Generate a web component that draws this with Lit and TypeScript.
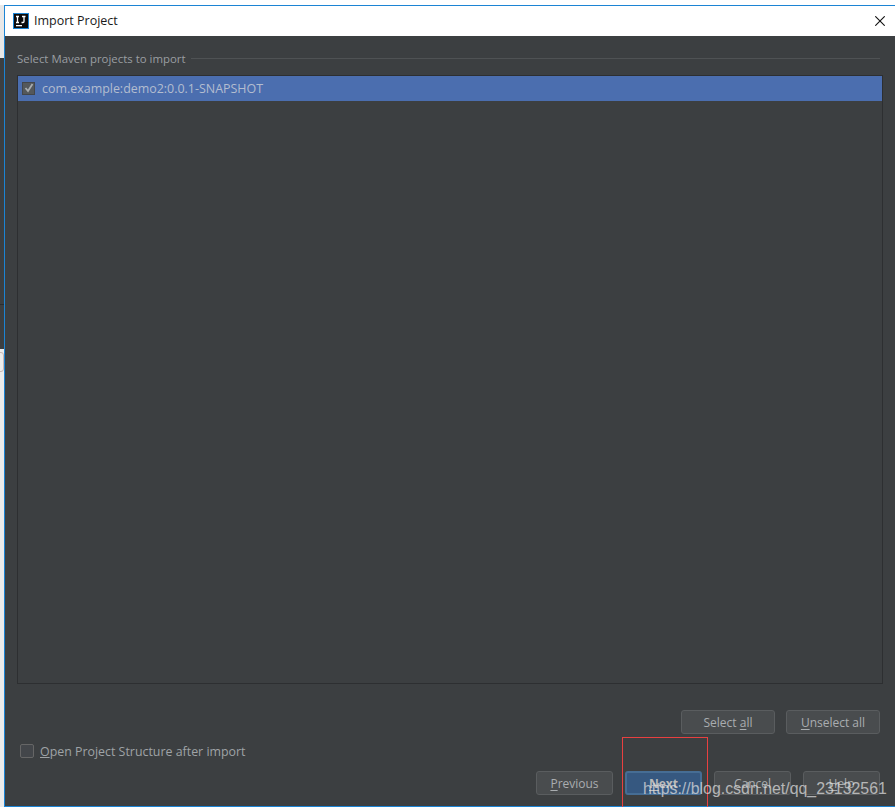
import { LitElement, html, css } from "lit";
import { customElement } from "lit/decorators.js";

@customElement("app-root")
export class AppRoot extends LitElement {
  static styles = css`
    :host {
      display: block;
      position: relative;
      width: 895px;
      height: 807px;
      overflow: hidden;
      background: #fff;
      font-family: "Open Sans", "Noto Sans", sans-serif;
      font-size: 12px;
      color: #a9adb0;
    }
    .page { display: flex; height: 807px; }
    .strip { width: 4px; display: flex; flex-direction: column; flex: none; overflow: hidden; }
    .s0 { height: 5px; background: #fff; flex: none; }
    .s1 { height: 53px; background: #e8e8e8; flex: none; }
    .s2 { height: 246px; background: #3c3f41; flex: none; }
    .s2b { height: 1px; background: #2b2d2e; flex: none; }
    .s3 { height: 44px; background: #3c3f41; flex: none; }
    .s4 { flex: 1; background: #ececec; padding-top: 3px; }
    .glyph { display: block; width: 5px; height: 18px; margin-left: -3px; border: 1px solid #c9b8b4; border-radius: 3px; }
    .window {
      flex: 1;
      display: flex;
      flex-direction: column;
      margin-top: 5px;
      border-left: 1px solid #1c84d4;
      border-top: 1px solid #1c84d4;
      border-bottom: 1px solid #1c84d4;
      min-width: 0;
    }
    .title {
      height: 29px;
      padding: 0 10px 1px 8px;
      flex: none;
      background: #fff;
      display: flex;
      align-items: center;
      color: #1a1a1a;
      font-size: 12.5px;
    }
    .title svg.logo { margin-right: 5px; }
    .title .name { flex: 1; }
    .body {
      flex: 1;
      background: #3c3f41;
      padding: 13px 15px 11px 12px;
      display: flex;
      flex-direction: column;
      min-height: 0;
    }
    .legend { display: flex; align-items: center; gap: 6px; height: 18px; font-size: 11.4px; color: #9a9ea1; }
    .legend i { flex: 1; height: 1px; background: #4f5254; }
    .list {
      margin: 8px -3px 0 0;
      height: 607px;
      border: 1px solid #2d2f31;
      background: #3c3f41;
      flex: none;
    }
    .row {
      height: 24px;
      padding: 0 0 1px 4px;
      background: #4b6eaf;
      display: flex;
      align-items: center;
      gap: 7px;
      color: #b3bdcf;
      font-size: 12.45px;
    }
    .cb {
      width: 12px;
      height: 12px;
      border: 1px solid #5d6061;
      border-radius: 2px;
      background: #45484a;
      flex: none;
      display: flex;
      align-items: center;
      justify-content: center;
      box-sizing: content-box;
    }
    .row .cb { width: 11px; height: 11px; background: #54585b; border-color: #43464a; border-radius: 0; }
    .select-row { display: flex; justify-content: flex-end; gap: 11px; margin-top: 26px; }
    .btn {
      width: 94px;
      height: 24px;
      box-sizing: border-box;
      border: 1px solid #5a5d5f;
      border-radius: 3px;
      background: #494c4e;
      color: #a9adb0;
      display: flex;
      align-items: center;
      justify-content: center;
      font-size: 12px;
    }
    .btn u { text-underline-offset: 2px; }
    .foot { display: flex; flex-direction: column; }
    .open { display: flex; align-items: center; gap: 6px; margin: 7px 0 0 3px; height: 20px; color: #9fa3a6; font-size: 12.4px; }
    .open .cb { border-color: #666; background: #43464a; }
    .nav { display: flex; justify-content: flex-end; gap: 12px; margin-top: 10px; }
    .nav .btn { width: 77px; }
    .nav .btn.next { background: #365880; border: 2px solid #466d94; color: #bbb; font-weight: 700; }
    .mark { position: absolute; left: 622px; top: 737px; width: 86px; height: 70px; box-sizing: border-box; border: 1px solid #e84040; border-bottom: none; }
    .wm {
      position: absolute;
      left: 643px;
      top: 779px;
      font-family: "Liberation Sans", Arial, sans-serif;
      font-size: 15.9px;
      line-height: 20px;
      color: rgba(225, 225, 225, 0.72);
      white-space: nowrap;
    }
  `;

  render() {
    return html`
      <div class="page">
        <div class="strip">
          <div class="s0"></div><div class="s1"></div><div class="s2"></div><div class="s2b"></div><div class="s3"></div>
          <div class="s4"><span class="glyph"></span></div>
        </div>
        <div class="window">
          <div class="title">
            <svg class="logo" width="16" height="16" viewBox="0 0 16 16">
              <rect x="0.5" y="0.5" width="15" height="15" fill="#0c0c0c" stroke="#1c84d4"/>
              <path d="M3 3.500h3M4.500 3.500v6M3 9.500h3M9 3.500h3.500M11 3.500v5q0 1-1 1H8.500" fill="none" stroke="#fff" stroke-width="1.300"/>
              <rect x="3" y="12" width="6" height="1.300" fill="#fff"/>
            </svg>
            <span class="name">Import Project</span>
            <svg width="10" height="10" viewBox="0 0 10 10"><path d="M.3.300l9.400 9.400M9.700.300l-9.400 9.400" stroke="#111" stroke-width="1.100"/></svg>
          </div>
          <div class="body">
            <div class="legend"><span>Select Maven projects to import</span><i></i></div>
            <div class="list">
              <div class="row">
                <span class="cb"><svg width="10" height="10" viewBox="0 0 10 10"><path d="M1.500 5l2.500 3 4.500-7" fill="none" stroke="#a8acaf" stroke-width="1.800"/></svg></span>
                <span>com.example:demo2:0.0.1-SNAPSHOT</span>
              </div>
            </div>
            <div class="select-row">
              <div class="btn"><span>Select <u>a</u>ll</span></div>
              <div class="btn"><span><u>U</u>nselect all</span></div>
            </div>
            <div class="foot">
              <div class="open"><span class="cb"></span><span><u>O</u>pen Project Structure after import</span></div>
              <div class="nav">
                <div class="btn"><span><u>P</u>revious</span></div>
                <div class="btn next"><span><u>N</u>ext</span></div>
                <div class="btn"><span>Cancel</span></div>
                <div class="btn"><span><u>H</u>elp</span></div>
              </div>
            </div>
          </div>
        </div>
      </div>
      <div class="mark"></div>
      <div class="wm">https://blog.csdn.net/qq_23132561</div>
    `;
  }
}
